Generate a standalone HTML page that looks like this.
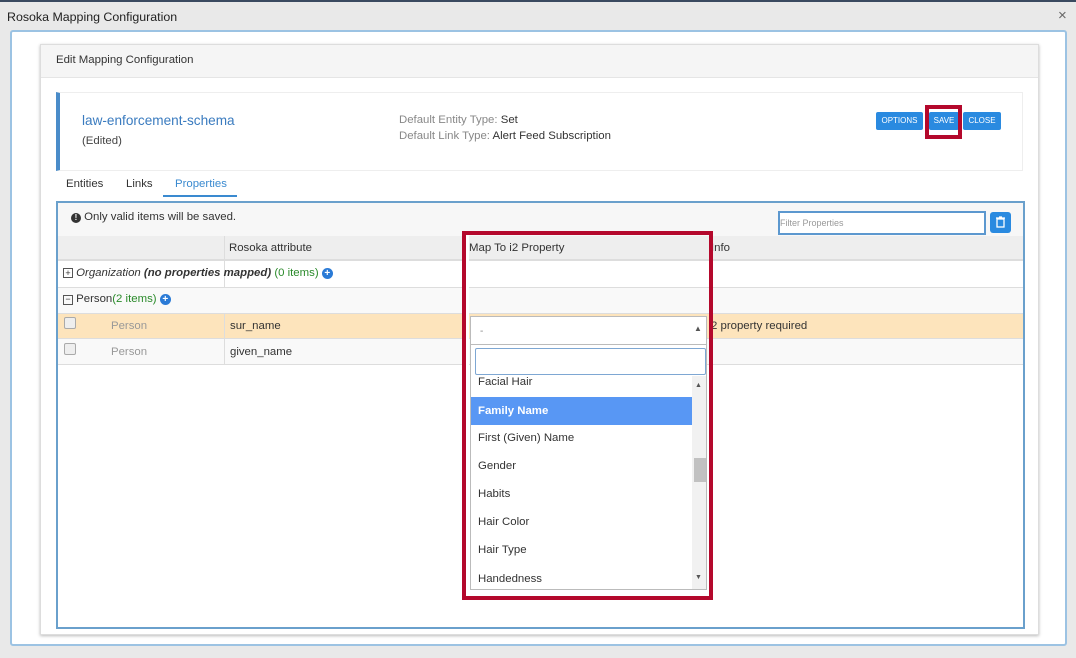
<!DOCTYPE html>
<html><head><style>
*{box-sizing:border-box;margin:0;padding:0}
body{width:1076px;height:658px;background:#e9e9e9;font-family:"Liberation Sans",sans-serif;font-size:11.4px;color:#333;position:relative;overflow:hidden}
.a{position:absolute}
.t{white-space:nowrap}
</style></head><body>
<div class="a" style="left:0;top:0;width:1076px;height:2px;background:#3a4a60"></div>
<div class="a t" style="left:7px;top:10px;font-size:12.4px;color:#222">Rosoka Mapping Configuration</div>
<div class="a t" style="left:1058px;top:7px;font-size:15px;color:#666">×</div>
<div class="a" style="left:10px;top:30px;width:1057px;height:616px;background:#fff;border:2px solid #9cc3e3;border-radius:3px"></div>
<div class="a" style="left:40px;top:44px;width:999px;height:591px;background:#fff;border:1px solid #ddd;box-shadow:0 1px 3px #bbb"></div>
<div class="a" style="left:41px;top:45px;width:997px;height:33px;background:#f5f5f5;border-bottom:1px solid #e5e5e5"></div>
<div class="a t" style="left:56px;top:54px;color:#333">Edit Mapping Configuration</div>
<div class="a" style="left:56px;top:92px;width:967px;height:79px;border:1px solid #eee;border-left:4px solid #4a8cc9"></div>
<div class="a t" style="left:82px;top:113px;font-size:13.6px;color:#3a7bbf">law-enforcement-schema</div>
<div class="a t" style="left:82px;top:135px;color:#444">(Edited)</div>
<div class="a t" style="left:399px;top:114px;color:#888">Default Entity Type: <span style="color:#333">Set</span></div>
<div class="a t" style="left:399px;top:130px;color:#888">Default Link Type: <span style="color:#333">Alert Feed Subscription</span></div>
<div class="a t" style="left:876px;top:112px;width:47px;height:18px;background:#2a8ae0;color:#fff;font-size:8px;line-height:18px;text-align:center;border-radius:2px">OPTIONS</div>
<div class="a t" style="left:929px;top:112px;width:30px;height:18px;background:#2a8ae0;color:#fff;font-size:8px;line-height:18px;text-align:center;border-radius:2px">SAVE</div>
<div class="a t" style="left:963px;top:112px;width:38px;height:18px;background:#2a8ae0;color:#fff;font-size:8px;line-height:18px;text-align:center;border-radius:2px">CLOSE</div>
<div class="a" style="left:925px;top:105px;width:37px;height:34px;border:4px solid #b4082c"></div>
<div class="a t" style="left:66px;top:178px;color:#333">Entities</div>
<div class="a t" style="left:126px;top:178px;color:#333">Links</div>
<div class="a t" style="left:175px;top:178px;color:#3a8ad0">Properties</div>
<div class="a" style="left:163px;top:195px;width:74px;height:2px;background:#3a8ad0"></div>
<div class="a" style="left:56px;top:201px;width:969px;height:428px;border:2px solid #6aa0cc;background:#fff"></div>
<div class="a" style="left:58px;top:203px;width:965px;height:33px;background:#f7f7f7"></div>
<div class="a t" style="left:71px;top:211px;color:#333"><span style="display:inline-block;width:10px;height:10px;border-radius:5px;background:#333;color:#fff;font-size:8px;line-height:10px;text-align:center;font-weight:bold">!</span> Only valid items will be saved.</div>
<div class="a t" style="left:778px;top:211px;width:208px;height:24px;border:2px solid #5c98cf;font-size:9px;color:#999;line-height:20px;background:#fff">Filter Properties</div>
<div class="a" style="left:990px;top:212px;width:21px;height:21px;background:#2a8ae0;border-radius:3px"><svg width="21" height="21"><rect x="7" y="7" width="7" height="8" fill="none" stroke="#fff" stroke-width="1.3"/><path d="M6 6h9M9 5h3" stroke="#fff" stroke-width="1.3"/></svg></div>
<div class="a" style="left:58px;top:236px;width:965px;height:25px;background:#eee;border-bottom:2px solid #ddd"></div>
<div class="a" style="left:224px;top:236px;width:1px;height:128px;background:#ddd"></div>
<div class="a t" style="left:229px;top:242px">Rosoka attribute</div>
<div class="a t" style="left:469px;top:242px">Map To i2 Property</div>
<div class="a t" style="left:711px;top:242px">Info</div>
<div class="a" style="left:58px;top:287px;width:965px;height:1px;background:#ddd"></div>
<div class="a t" style="left:63px;top:267px"><span style="display:inline-block;width:10px;height:10px;border:1px solid #555;font-size:9px;line-height:8px;text-align:center">+</span> <i>Organization <b>(no properties mapped)</b></i> <span style="color:#2a8a2a">(0 items)</span> <span style="display:inline-block;width:11px;height:11px;border-radius:6px;background:#2a7ad6;color:#fff;font-size:10px;line-height:11px;text-align:center;font-weight:bold">+</span></div>
<div class="a" style="left:58px;top:288px;width:965px;height:25px;background:#f9f9f9"></div>
<div class="a t" style="left:63px;top:293px"><span style="display:inline-block;width:10px;height:10px;border:1px solid #555;font-size:9px;line-height:7px;text-align:center">−</span> Person<span style="color:#2a8a2a">(2 items)</span> <span style="display:inline-block;width:11px;height:11px;border-radius:6px;background:#2a7ad6;color:#fff;font-size:10px;line-height:11px;text-align:center;font-weight:bold">+</span></div>
<div class="a" style="left:58px;top:313px;width:965px;height:26px;background:#fde4bc;border-top:1px solid #ddd;border-bottom:1px solid #ddd"></div>
<div class="a" style="left:58px;top:339px;width:965px;height:26px;background:#f9f9f9;border-bottom:1px solid #ddd"></div>
<div class="a" style="left:224px;top:313px;width:1px;height:52px;background:#ddd"></div>
<div class="a" style="left:64px;top:317px;width:12px;height:12px;border:1px solid #aaa;border-radius:2px;background:#eee"></div>
<div class="a" style="left:64px;top:343px;width:12px;height:12px;border:1px solid #aaa;border-radius:2px;background:#eee"></div>
<div class="a t" style="left:111px;top:320px;color:#999">Person</div>
<div class="a t" style="left:111px;top:346px;color:#999">Person</div>
<div class="a t" style="left:230px;top:320px">sur_name</div>
<div class="a t" style="left:230px;top:346px">given_name</div>
<div class="a t" style="left:711px;top:320px">2 property required</div>
<div class="a" style="left:462px;top:231px;width:251px;height:369px;border:4px solid #b4082c"></div>
<div class="a" style="left:466px;top:235px;width:3px;height:361px;background:#fff"></div>
<div class="a" style="left:470px;top:316px;width:237px;height:29px;background:#fff;border:1px solid #bbb"></div>
<div class="a t" style="left:480px;top:326px;color:#888;font-size:10px">-</div>
<div class="a t" style="left:694px;top:324px;color:#555;font-size:8px">▲</div>
<div class="a" style="left:470px;top:344px;width:237px;height:246px;background:#fff;border:1px solid #bbb"></div>
<div class="a" style="left:475px;top:348px;width:231px;height:27px;border:1px solid #7ea7d3;border-radius:2px"></div>
<div class="a" style="left:471px;top:376px;width:221px;height:213px;overflow:hidden">
<div style="position:absolute;top:0px;left:7px">Facial Hair</div>
<div style="position:absolute;top:21px;left:0;width:221px;height:28px;background:#5897f4;color:#fff;font-weight:bold;padding:8px 7px">Family Name</div>
<div style="position:absolute;top:56px;left:7px">First (Given) Name</div>
<div style="position:absolute;top:84px;left:7px">Gender</div>
<div style="position:absolute;top:112px;left:7px">Habits</div>
<div style="position:absolute;top:140px;left:7px">Hair Color</div>
<div style="position:absolute;top:168px;left:7px">Hair Type</div>
<div style="position:absolute;top:197px;left:7px">Handedness</div>
</div>
<div class="a" style="left:692px;top:376px;width:14px;height:213px;background:#f1f1f1"></div>
<div class="a" style="left:694px;top:458px;width:12px;height:24px;background:#c1c1c1"></div>
<div class="a t" style="left:695px;top:382px;color:#555;font-size:7px">▲</div>
<div class="a t" style="left:695px;top:574px;color:#555;font-size:7px">▼</div>
</body></html>
